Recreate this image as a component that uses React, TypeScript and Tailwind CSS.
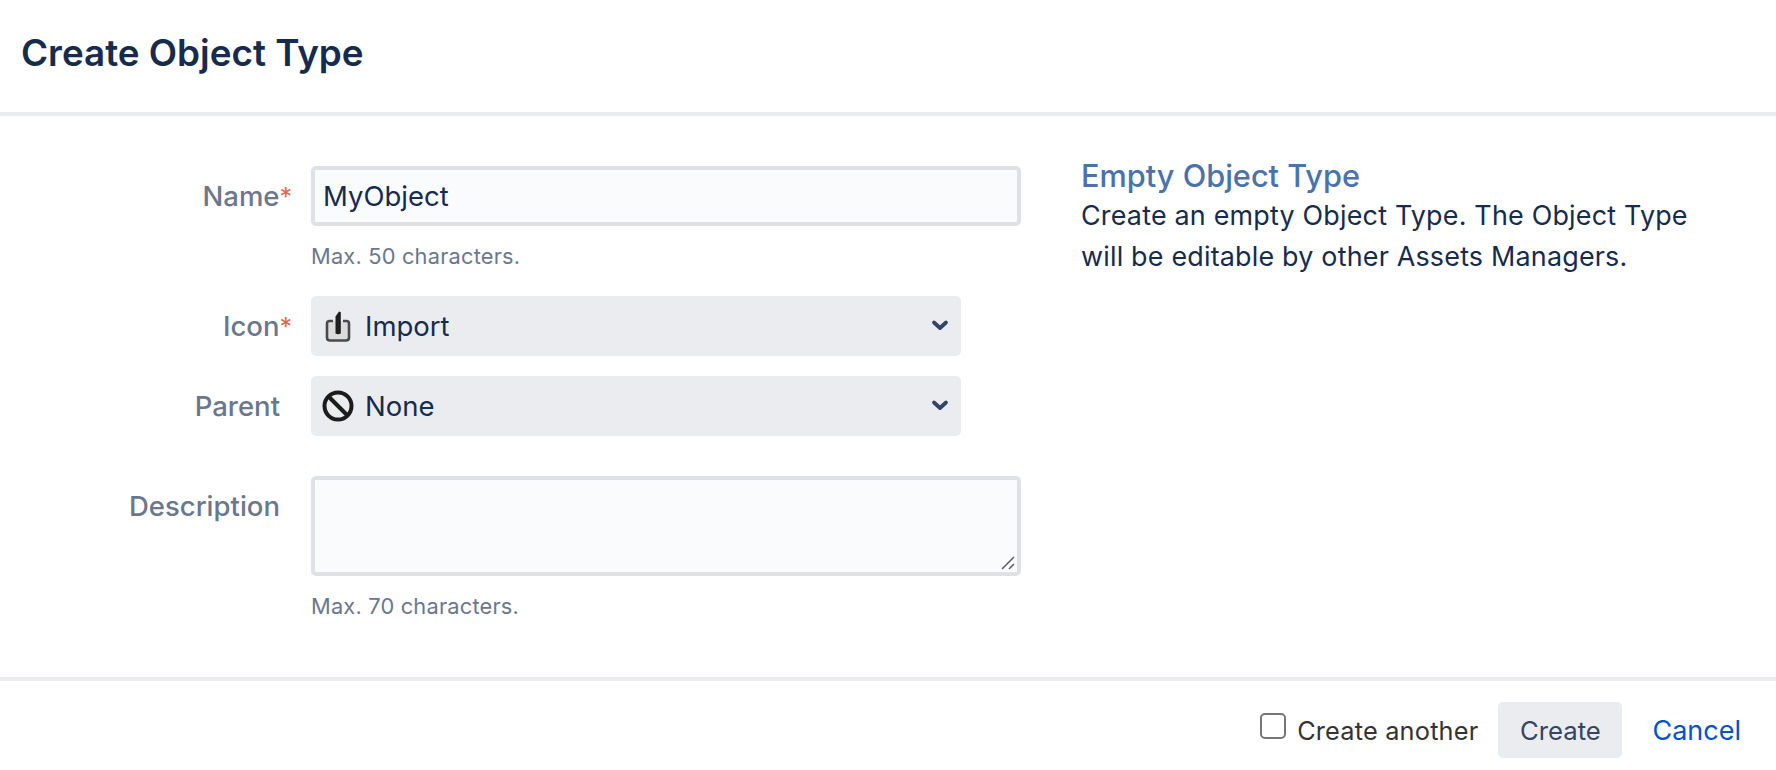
import React from "react";

function Chevron() {
  return (
    <svg width="18" height="14" viewBox="0 0 18 14" className="shrink-0">
      <path d="M3 3.500 L9 9 L15 3.500" fill="none" stroke="#344563" strokeWidth="3.800" strokeLinecap="round" strokeLinejoin="round" />
    </svg>
  );
}

function ImportIcon() {
  return (
    <svg width="30" height="34" viewBox="0 0 30 34" className="shrink-0">
      <path d="M10 12 H6.500 Q4 12 4 14.500 V28.500 Q4 31.500 7 31.500 H23 Q26 31.500 26 28.500 V14.500 Q26 12 23.500 12 H20" fill="#dcdcdc" stroke="#4a4a4a" strokeWidth="2.600" />
      <path d="M12.500 24.500 V7.500 L16 2.500 L17.800 3.200 V24.500 Q15 26 12.500 24.500 Z" fill="#1f1f1f" />
    </svg>
  );
}

function NoneIcon() {
  return (
    <svg width="34" height="34" viewBox="0 0 34 34" className="shrink-0">
      <circle cx="17" cy="17" r="13.500" fill="none" stroke="#1c1c1c" strokeWidth="4" />
      <path d="M7.500 7.500 L26.500 26.500" stroke="#1c1c1c" strokeWidth="4" />
    </svg>
  );
}

function Label({ text, required }: { text: string; required?: boolean }) {
  return (
    <div className="w-[292px] shrink-0 text-right text-[27.500px] font-medium leading-[32px] text-[#6b778c]">
      {text}
      {required ? <span className="text-[#dd6b50] font-normal text-[25px]">*</span> : <span className="inline-block w-[12px]" />}
    </div>
  );
}

function SelectBox({ icon, text }: { icon: React.ReactNode; text: string }) {
  return (
    <div className="w-[650px] h-[60px] rounded-[5px] bg-[#ebecf0] flex items-center pl-[10px] pr-[12px]">
      <span className="w-[34px] flex justify-center">{icon}</span>
      <span className="ml-[10px] pt-[2px] text-[27.500px] text-[#172b4d] flex-1">{text}</span>
      <Chevron />
    </div>
  );
}

const helpText = "ml-[311px] mt-[15px] text-[21.800px] leading-[30px] text-[#6b778c] tracking-[0.2px]";

export default function App() {
  return (
    <div className="w-[1776px] h-[770px] bg-white overflow-hidden flex flex-col font-['Inter',sans-serif]">
      <header className="h-[116px] shrink-0 border-b-[4px] border-[#ebecf0] pl-[21px] pt-[30px]">
        <h1 className="text-[36.800px] leading-[46px] font-semibold text-[#172b4d]">Create Object Type</h1>
      </header>

      <main className="h-[565px] shrink-0 border-b-[4px] border-[#ebecf0] flex pt-[50px]">
        <div className="w-[1021px] shrink-0 flex flex-col">
          <div className="flex items-center">
            <Label text="Name" required />
            <div className="ml-[19px] w-[710px] h-[60px] rounded-[5px] border-[4px] border-[#dfe1e6] bg-[#fafbfc] flex items-center pl-[8px] pt-[2px] text-[27.500px] text-[#172b4d]">MyObject</div>
          </div>
          <div className={helpText}>Max. 50 characters.</div>
          <div className="flex items-center mt-[25px]">
            <Label text="Icon" required />
            <div className="ml-[19px]"><SelectBox icon={<ImportIcon />} text="Import" /></div>
          </div>
          <div className="flex items-center mt-[20px]">
            <Label text="Parent" />
            <div className="ml-[19px]"><SelectBox icon={<NoneIcon />} text="None" /></div>
          </div>
          <div className="flex items-start mt-[40px]">
            <div className="mt-[14px]"><Label text="Description" /></div>
            <div className="relative ml-[19px] w-[710px] h-[100px] rounded-[5px] border-[4px] border-[#dfe1e6] bg-[#fafbfc]">
              <svg width="16" height="16" viewBox="0 0 16 16" className="absolute right-[1px] bottom-[1px]">
                <path d="M2 14 L14 2 M9 14 L14 9" stroke="#5c5c5c" strokeWidth="1.500" />
              </svg>
            </div>
          </div>
          <div className={helpText}>Max. 70 characters.</div>
        </div>
        <div className="ml-[60px] w-[640px] -mt-[6px]">
          <div className="text-[30.700px] leading-[32px] font-medium text-[#4a72ab]">Empty Object Type</div>
          <p className="mt-[3px] text-[26.900px] leading-[40.500px] text-[#172b4d] tracking-[0.2px]">Create an empty Object Type. The Object Type will be editable by other Assets Managers.</p>
        </div>
      </main>

      <footer className="flex-1 flex items-center justify-end pr-[35px] pt-[9px]">
        <label className="flex items-center">
          <span className="w-[26px] h-[26px] -mt-[9px] rounded-[5px] border-2 border-[#767676] bg-white" />
          <span className="ml-[11px] pt-[2px] text-[25.300px] text-[#333333] tracking-[0.2px]">Create another</span>
        </label>
        <button className="ml-[20px] w-[124px] h-[56px] rounded-[5px] bg-[#ebecf0] pt-[2px] text-[25.700px] text-[#344563]">Create</button>
        <a className="ml-[30px] pt-[2px] text-[27px] text-[#0052cc]">Cancel</a>
      </footer>
    </div>
  );
}
